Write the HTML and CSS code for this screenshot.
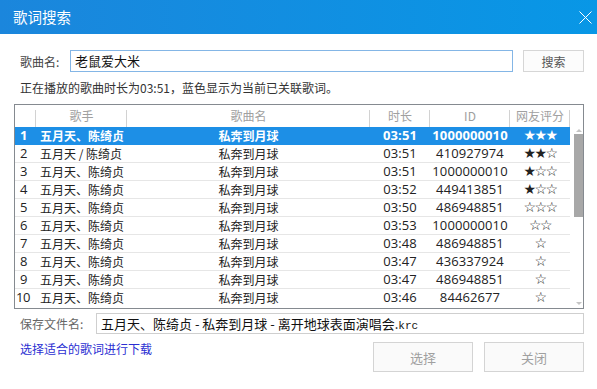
FILE: index.html
```html
<!DOCTYPE html>
<html lang="zh-cn">
<head>
    <meta charset="UTF-8">
    <meta name="viewport" content="width=device-width, initial-scale=1.0">
    <title>歌词搜索</title>
    <link rel="stylesheet" href="styles.css">
</head>
<body>
    <div class="dialog">
        <div class="titlebar">
            <span class="title">歌词搜索</span>
            <svg class="close" width="13" height="13" viewBox="0 0 13 13">
                <path d="M0.5 0.5 L12.5 12.5 M12.5 0.5 L0.5 12.5" stroke="#fff" stroke-width="1" fill="none"/>
            </svg>
        </div>
        <div class="content">
            <div class="search-row">
                <span class="label">歌曲名:</span>
                <div class="input focus">老鼠爱大米</div>
                <button class="btn-search">搜索</button>
            </div>
            <div class="info">正在播放的歌曲时长为03:51，蓝色显示为当前已关联歌词。</div>
            <div class="list">
                <div class="list-head">
                    <div class="hcell"></div>
                    <div class="hcell">歌手</div>
                    <div class="hcell">歌曲名</div>
                    <div class="hcell">时长</div>
                    <div class="hcell">ID</div>
                    <div class="hcell">网友评分</div>
                </div>
                <div class="list-body">
                    <div class="rows">
                        <div class="row selected"><span class="n">1</span><span class="singer">五月天、陈绮贞</span><span>私奔到月球</span><span class="n">03:51</span><span class="n">1000000010</span><span class="star">★★★</span></div>
                        <div class="row"><span class="n">2</span><span class="singer">五月天 / 陈绮贞</span><span>私奔到月球</span><span class="n">03:51</span><span class="n">410927974</span><span class="star">★★☆</span></div>
                        <div class="row"><span class="n">3</span><span class="singer">五月天、陈绮贞</span><span>私奔到月球</span><span class="n">03:51</span><span class="n">1000000010</span><span class="star">★☆☆</span></div>
                        <div class="row"><span class="n">4</span><span class="singer">五月天、陈绮贞</span><span>私奔到月球</span><span class="n">03:52</span><span class="n">449413851</span><span class="star">★☆☆</span></div>
                        <div class="row"><span class="n">5</span><span class="singer">五月天、陈绮贞</span><span>私奔到月球</span><span class="n">03:50</span><span class="n">486948851</span><span class="star">☆☆☆</span></div>
                        <div class="row"><span class="n">6</span><span class="singer">五月天、陈绮贞</span><span>私奔到月球</span><span class="n">03:53</span><span class="n">1000000010</span><span class="star">☆☆</span></div>
                        <div class="row"><span class="n">7</span><span class="singer">五月天、陈绮贞</span><span>私奔到月球</span><span class="n">03:48</span><span class="n">486948851</span><span class="star">☆</span></div>
                        <div class="row"><span class="n">8</span><span class="singer">五月天、陈绮贞</span><span>私奔到月球</span><span class="n">03:47</span><span class="n">436337924</span><span class="star">☆</span></div>
                        <div class="row"><span class="n">9</span><span class="singer">五月天、陈绮贞</span><span>私奔到月球</span><span class="n">03:47</span><span class="n">486948851</span><span class="star">☆</span></div>
                        <div class="row last"><span class="n num10">10</span><span class="singer">五月天、陈绮贞</span><span>私奔到月球</span><span class="n">03:46</span><span class="n">84462677</span><span class="star">☆</span></div>
                    </div>
                    <div class="scrollbar">
                        <div class="arrow up"></div>
                        <div class="thumb"></div>
                        <div class="track"></div>
                        <div class="arrow down"></div>
                    </div>
                </div>
            </div>
            <div class="save-row">
                <span class="label save-label">保存文件名:</span>
                <div class="input">五月天、陈绮贞 - 私奔到月球 - 离开地球表面演唱会.<span class="ext">krc</span></div>
            </div>
            <div class="bottom-row">
                <a class="link">选择适合的歌词进行下载</a>
                <div class="buttons">
                    <button class="btn">选择</button>
                    <button class="btn">关闭</button>
                </div>
            </div>
        </div>
    </div>
</body>
</html>
```

FILE: styles.css
```css
body{
    margin: 0;
    background: #fff;
    font-family: "Noto Sans CJK SC", "Noto Sans", sans-serif;
    font-size: 12px;
    color: #222;
}
.dialog{
    width: 597px;
    height: 389px;
    background: #fff;
    overflow: hidden;
}
.titlebar{
    height: 34px;
    background: linear-gradient(to right, #1b86dc, #0897e6);
    display: flex;
    align-items: center;
    justify-content: space-between;
    padding: 0 5px 0 13px;
}
.title{
    color: #fff;
    font-size: 14.5px;
    line-height: 34px;
}
.close{
    display: block;
    margin-top: 1px;
}
.content{
    padding: 16px 13px 0 14px;
}
.label{
    padding-left: 6px;
    color: #444;
    font-size: 12px;
}
.search-row{
    display: flex;
    align-items: center;
    height: 22px;
}
.search-row .label{
    width: 50px;
}
.input{
    flex: 1;
    height: 22px;
    box-sizing: border-box;
    border: 1px solid #cfcfcf;
    padding: 0 4px;
    font-size: 13px;
    line-height: 20px;
    color: #111;
    white-space: nowrap;
    overflow: hidden;
}
.input.focus{
    border-color: #84b6e6;
}
.btn-search{
    width: 61px;
    height: 22px;
    margin-left: 10px;
    border: 1px solid #d6d6d6;
    background: #fcfcfc;
    color: #555;
    font-family: inherit;
    font-size: 12px;
    padding: 0;
}
.info{
    padding-left: 6px;
    margin-top: 8px;
    line-height: 16px;
    color: #333;
}
.list{
    margin-top: 8px;
    border: 1px solid #858a90;
    width: 568px;
    height: 203px;
}
.list-head,
.row{
    display: grid;
    grid-template-columns: 21px 91px 243px 60px 80px 60px;
}
.list-head{
    height: 22px;
}
.hcell{
    text-align: center;
    line-height: 22px;
    color: #a0a0a0;
    background: linear-gradient(#d2d2d2, #d2d2d2) right 5px / 1px 17px no-repeat;
}
.list-body{
    display: flex;
}
.rows{
    width: 555px;
}
.row{
    height: 18px;
    box-sizing: border-box;
    border-bottom: 1px solid #e6e6e6;
    line-height: 17px;
    color: #222;
    font-size: 12px;
}
.row.last{
    border-bottom: none;
}
.row span{
    text-align: center;
    white-space: nowrap;
}
.row span.n{
    font-family: "Open Sans", "Noto Sans", sans-serif;
    font-size: 13px;
    letter-spacing: 0.1px;
}
.row span.star{
    font-family: "DejaVu Sans", sans-serif;
    font-size: 14px;
    line-height: 17px;
    letter-spacing: -1.5px;
}
.row span:first-child{
    text-align: left;
    padding-left: 5px;
}
.row span.num10{
    padding-left: 1px;
    letter-spacing: -0.5px;
}
.row .singer{
    text-align: left;
    padding-left: 4px;
}
.row.selected{
    background: #1d8fe6;
    color: #fff;
    font-weight: bold;
    border-bottom-color: #1d8fe6;
}
.scrollbar{
    width: 13px;
    display: flex;
    flex-direction: column;
    align-items: flex-end;
    height: 180px;
}
.arrow{
    width: 9px;
    height: 7px;
    display: flex;
    justify-content: center;
    align-items: center;
}
.arrow.up::before{
    content: "";
    border-left: 3px solid transparent;
    border-right: 3px solid transparent;
    border-bottom: 3px solid #c4c4c4;
}
.arrow.down::before{
    content: "";
    border-left: 3px solid transparent;
    border-right: 3px solid transparent;
    border-top: 3px solid #c4c4c4;
}
.thumb{
    width: 9px;
    height: 83px;
    background: #a8a8a8;
}
.track{
    flex: 1;
}
.save-row{
    display: flex;
    align-items: center;
    margin-top: 4px;
}
.save-label{
    width: 76px;
    color: #666;
}
.save-row .input{
    height: 21px;
    line-height: 19px;
}
.ext{
    font-family: "Liberation Mono", monospace;
    font-size: 11px;
}
.bottom-row{
    display: flex;
    justify-content: space-between;
    margin-top: 8px;
}
.link{
    padding-left: 6px;
    color: #2b2fd2;
    line-height: 14px;
    font-size: 12px;
}
.buttons{
    display: flex;
    gap: 11px;
}
.btn{
    width: 100px;
    height: 30px;
    border: 1px solid #d4d4d4;
    background: #fafafa;
    color: #a0a0a0;
    font-family: inherit;
    font-size: 13px;
    padding: 0;
}
```
